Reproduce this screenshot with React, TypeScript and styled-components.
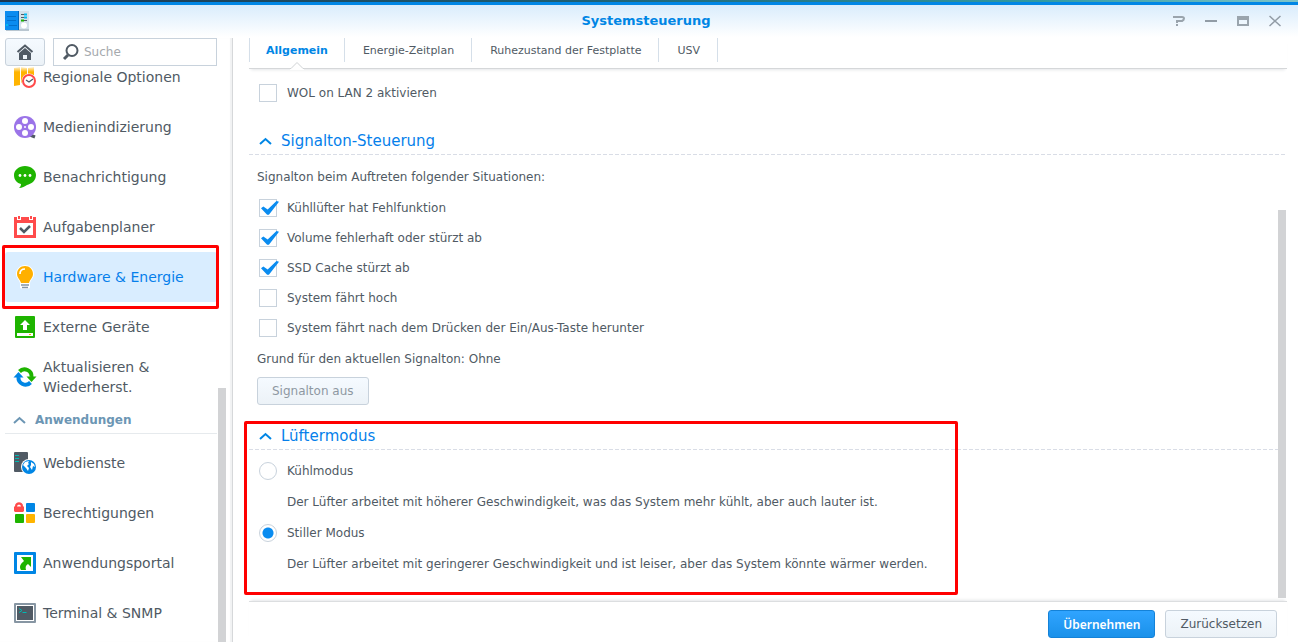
import React, { useState } from 'react';
import styled, { createGlobalStyle, css } from 'styled-components';

const color = {
  blue: '#0086e5',
  link: '#057feb',
  text: '#505a64',
  line: '#c8d2dc',
  red: '#ff0000',
  thumb: '#d2d3d5',
};

const GlobalStyle = createGlobalStyle`
  *, *::before, *::after { box-sizing: border-box; }
  html, body, #root { height: 100%; margin: 0; }
  body, button, input { font-family: Verdana, 'DejaVu Sans', sans-serif; color: ${color.text}; }
  body { background: #fff; overflow: hidden; }
`;

const Desktop = styled.div`
  display: flex;
  flex-direction: column;
  height: 100vh;
  padding-top: 2px;
  background: linear-gradient(90deg, #1c3550, #1d5f74 45%, #2f9aa3 80%, #7cc4cb);
`;

const Window = styled.div`
  display: flex;
  flex: 1;
  flex-direction: column;
  min-height: 0;
  border-top: 3px solid ${color.blue};
  background: linear-gradient(#d9ecfc, #fff 32px);
`;

const TitleBar = styled.header`
  display: grid;
  grid-template-columns: 1fr auto 1fr;
  align-items: center;
  height: 33px;
  padding: 0 11px 1px 5px;
`;

const Title = styled.h1`
  margin: 0;
  font-size: 13px;
  line-height: 20px;
  font-weight: bold;
  color: ${color.blue};
`;

const Controls = styled.div`
  display: flex;
  justify-content: flex-end;
  gap: 8px;
`;

const ControlButton = styled.button`
  display: grid;
  place-items: center;
  width: 24px;
  height: 24px;
  padding: 0;
  border: 0;
  background: none;
`;

const Body = styled.div`
  display: flex;
  flex: 1;
  min-height: 0;
`;

const Sidebar = styled.aside`
  display: flex;
  flex-direction: column;
  flex: none;
  width: 233px;
  border-right: 1px solid #d6d8da;
  box-shadow: inset -2px 0 1px #f1f2f3;
`;

const Tools = styled.div`
  display: flex;
  gap: 8px;
  padding: 0 15px 0 5px;
`;

const buttonFace = css`
  border: 1px solid ${color.line};
  border-radius: 3px;
  background: linear-gradient(#f5faff, #ecf2f7);
`;

const HomeButton = styled.button`
  ${buttonFace}
  display: grid;
  flex: none;
  place-items: center;
  width: 40px;
  height: 28px;
  padding: 0;
`;

const SearchBox = styled.label`
  display: flex;
  align-items: center;
  flex: 1;
  gap: 4px;
  height: 28px;
  min-width: 0;
  padding-left: 8px;
  border: 1px solid ${color.line};
  background: #fff;
`;

const SearchInput = styled.input`
  flex: 1;
  min-width: 0;
  padding: 0;
  border: 0;
  outline: 0;
  background: none;
  font-size: 12px;
  &::placeholder { color: #a5a9ad; opacity: 1; }
`;

const NavViewport = styled.nav`
  position: relative;
  flex: 1;
  min-height: 0;
  padding: 0 15px 0 5px;
  overflow: hidden;
  &::before {
    content: '';
    position: absolute;
    z-index: 1;
    inset: 0 15px auto 5px;
    height: 6px;
    background: linear-gradient(#fff, #fff0);
  }
`;

const NavScroll = styled.div`
  margin-top: -14px;
`;

const NavItem = styled.a<{ $active?: boolean }>`
  display: flex;
  position: relative;
  align-items: center;
  gap: 6px;
  height: 50px;
  padding-left: 8px;
  border-radius: 3px;
  background: ${(p) => (p.$active ? '#d9edff' : 'transparent')};
  color: ${(p) => (p.$active ? color.link : color.text)};
  font-size: 14px;
  line-height: 20px;
  text-decoration: none;
`;

const NavLabel = styled.span`
  flex: 1;
`;

const NavIcon = styled.svg`
  flex: none;
  width: 24px;
  height: 24px;
`;

const Marker = styled.span<{ $wide?: boolean }>`
  position: absolute;
  inset: ${(p) => (p.$wide ? '-5px auto -15px -5px' : '-7px -2px -7px -3px')};
  width: ${(p) => (p.$wide ? '714px' : 'auto')};
  border: 3px solid ${color.red};
  border-radius: 2px;
  pointer-events: none;
`;

const NavHeading = styled.button`
  display: flex;
  align-items: center;
  gap: 9px;
  width: 100%;
  height: 32px;
  margin-bottom: 4px;
  padding: 4px 0 0 8px;
  border: 0;
  border-bottom: 1px solid #e6eaed;
  background: none;
  color: #6c96b4;
  font-size: 12px;
  font-weight: bold;
`;

const Thumb = styled.span<{ $main?: boolean }>`
  position: absolute;
  top: ${(p) => (p.$main ? '141px' : '322px')};
  right: ${(p) => (p.$main ? '12px' : '6px')};
  bottom: ${(p) => (p.$main ? '3px' : '0')};
  width: 8px;
  background: ${color.thumb};
`;

const Main = styled.main`
  display: flex;
  flex: 1;
  flex-direction: column;
  min-width: 0;
`;

const Tabs = styled.div`
  display: flex;
  height: 31px;
  margin: 0 11px 0 16px;
  border-bottom: 1px solid #d5d7d9;
  box-shadow: 0 3px 3px -2px #e4e6e8;
`;

const Tab = styled.button<{ $active: boolean }>`
  position: relative;
  height: 24px;
  padding: 0 17px 0 18px;
  border: 0;
  border-right: 1px solid #d5dfe9;
  background: none;
  color: ${(p) => (p.$active ? color.blue : color.text)};
  font-size: 11px;
  font-weight: ${(p) => (p.$active ? 'bold' : 'normal')};
  white-space: nowrap;
  &:first-child { padding: 0 16px; border-left: 1px solid #d5dfe9; }
`;

const Notch = styled.svg`
  position: absolute;
  top: 24px;
  left: 50%;
  width: 14px;
  height: 8px;
  margin-left: -7px;
`;

const Content = styled.div`
  position: relative;
  flex: 1;
  min-height: 0;
  padding: 9px 11px 0 16px;
  overflow: hidden;
`;

const Section = styled.section`
  position: relative;
  margin-bottom: 21px;
  &:first-of-type { margin-bottom: 23px; }
  &:last-of-type { margin-bottom: 0; }
`;

const SectionHeading = styled.h2`
  height: 24px;
  margin: 0 0 6px;
  background: repeating-linear-gradient(90deg, #d9dde6 0 4px, transparent 4px 6px) bottom / 100% 1px no-repeat;
  font-weight: normal;
`;

const SectionToggle = styled.button`
  display: flex;
  align-items: center;
  gap: 9px;
  height: 20px;
  padding: 0 0 0 10px;
  border: 0;
  background: none;
  color: ${color.link};
  font-size: 15px;
  line-height: 20px;
`;

const Choice = styled.label`
  display: flex;
  align-items: center;
  gap: 10px;
  height: 30px;
  padding-left: 10px;
  font-size: 12px;
`;

const Paragraph = styled.p<{ $indent?: boolean }>`
  margin: 0;
  padding-left: ${(p) => (p.$indent ? '38px' : '8px')};
  font-size: 12px;
  line-height: 32px;
`;

const Check = styled.input`
  position: relative;
  flex: none;
  appearance: none;
  width: 18px;
  height: 18px;
  margin: 0;
  border: 1px solid ${color.line};
  background: #fff;
  &:checked::after {
    content: '';
    position: absolute;
    top: 1px;
    left: 1px;
    width: 18px;
    height: 14px;
    background: #0a8cf0;
    clip-path: polygon(0 52%, 13% 40%, 37% 60%, 86% 0, 100% 5%, 44% 98%, 34% 98%);
  }
`;

const Radio = styled.input`
  flex: none;
  appearance: none;
  width: 18px;
  height: 18px;
  margin: 0;
  border: 1px solid ${color.line};
  border-radius: 50%;
  background: #fff;
  &:checked { background: radial-gradient(circle, #0a8cf0 5px, #fff 6px); }
`;

const Button = styled.button<{ $primary?: boolean }>`
  ${buttonFace}
  height: 28px;
  padding: 0 14px;
  font-size: 12px;
  &:disabled { color: #8e98a2; }
  ${(p) =>
    p.$primary &&
    css`
      border-color: #1482d8;
      background: linear-gradient(#30a4ff, #1a91ea);
      color: #fff;
      font-family: 'Noto Sans', sans-serif;
      font-weight: 600;
    `}
`;

const ButtonRow = styled.div`
  padding: 2px 0 0 8px;
`;

const Footer = styled.footer`
  display: flex;
  justify-content: flex-end;
  gap: 10px;
  height: 41px;
  margin: 0 11px 0 16px;
  padding: 8px 10px 0 0;
  border-top: 1px solid #dcdee0;
  box-shadow: 0 -3px 3px -2px #e4e6e8;
`;

const Chevron = ({ stroke }: { stroke: string }) => (
  <svg width="13" height="8" viewBox="0 0 13 8" fill="none" stroke={stroke} strokeWidth="2" aria-hidden="true">
    <path d="M1 7l5.500-5L12 7" />
  </svg>
);

const icons: Record<string, React.ReactNode> = {
  region: (
    <>
      <path fill="#ffb400" d="M1 3l6-1v18l-6 1zM8 2l6 1v9l-6 6zM15 3l6-1v8h-6z" />
      <circle cx="16" cy="16" r="7.500" fill="#fff" />
      <circle cx="16" cy="16" r="6" fill="#fff" stroke="#ff4b4b" strokeWidth="2" />
      <path d="M13 15l3 2 4-3" fill="none" stroke="#505a64" strokeWidth="1.300" />
    </>
  ),
  media: (
    <>
      <path d="M17 20l5 2" stroke="#505a64" strokeWidth="3" />
      <circle cx="12" cy="12" r="11" fill="#9b74e8" />
      <g fill="#fff">
        <circle cx="12" cy="6" r="3" />
        <circle cx="12" cy="18" r="3" />
        <circle cx="6" cy="12" r="3" />
        <circle cx="18" cy="12" r="3" />
        <circle cx="12" cy="12" r="1" />
      </g>
    </>
  ),
  bell: (
    <>
      <path fill="#1eb400" d="M12 1c6 0 11 4 11 9 0 6-5 9-9 10-2 1-5 3-8 3 1-1 2-2 2-4-4-1-7-4-7-9 0-5 5-9 11-9z" />
      <g fill="#fff">
        <circle cx="7" cy="10.500" r="1.400" />
        <circle cx="12" cy="10.500" r="1.400" />
        <circle cx="17" cy="10.500" r="1.400" />
      </g>
    </>
  ),
  tasks: (
    <>
      <path fill="#ff4b4b" d="M1 2h22v21H1z" />
      <path fill="#fff" d="M4 8h16v12H4zM4 1h4v4H4zM16 1h4v4h-4z" />
      <path fill="#ff4b4b" d="M5 1h2v3H5zM17 1h2v3h-2z" />
      <path d="M7 13l4 4 6-6" fill="none" stroke="#505a64" strokeWidth="2.500" />
    </>
  ),
  bulb: (
    <>
      <path fill="#fff" d="M12 0c5 0 9 4 9 9 0 4-3 5-4 9v5l-3 1h-4l-3-1v-5C6 14 3 13 3 9c0-5 4-9 9-9z" />
      <path fill="#ffb000" d="M12 1c4.500 0 8 3.500 8 8 0 4-3 5-4 9H8C7 14 4 13 4 9c0-4.500 3.500-8 8-8z" />
      <path d="M7 9c0-3 2-5 5-5" fill="none" stroke="#fff" strokeWidth="1.700" />
      <path d="M8 20h8M9 22.500h6" stroke="#8796a3" strokeWidth="1.300" />
    </>
  ),
  drive: (
    <>
      <rect x="2" y="1" width="20" height="22" rx="1" fill="#1eb400" />
      <path fill="#fff" d="M12 5l5 5h-3v5h-4v-5H7zM4 18h16v3H4z" />
      <path fill="#ffb000" d="M16 19h2v1h-2z" />
    </>
  ),
  update: (
    <>
      <path d="M6.500 6.500A7 7 0 0 1 18.500 12" fill="none" stroke="#1eb400" strokeWidth="4" />
      <path fill="#1eb400" d="M13.500 11.500H23.500L18.500 17z" />
      <path d="M17.500 17.500A7 7 0 0 1 5.500 12" fill="none" stroke="#0086e5" strokeWidth="4" />
      <path fill="#0086e5" d="M.5 12.500H10.500L5.500 7z" />
    </>
  ),
  web: (
    <>
      <rect x="1" y="1" width="14" height="20" rx="1" fill="#505a64" />
      <path d="M2 4.500h4M2 7.500h4M2 10.500h4" stroke="#00b9b4" />
      <circle cx="16" cy="16" r="8" fill="#fff" />
      <circle cx="16" cy="16" r="7" fill="#0086e5" />
      <path fill="#fff" d="M10 14l2-3 4-1-1 2 1 1-2 2 2 2-1 3-2-3zM18 11l3 2 1 3-2-1-1 4-2-3 1-2z" />
    </>
  ),
  rights: (
    <>
      <path fill="#ff4b4b" d="M2 5c0-5 8-5 8 0l1 1v4l-1 1H2l-1-1V6z" />
      <path d="M4 5.500c0-2.500 4-2.500 4 0z" fill="#fff" />
      <rect x="13" y="2" width="9" height="9" rx="1" fill="#0086e5" />
      <rect x="2" y="13" width="9" height="9" rx="1" fill="#1eb400" />
      <rect x="13" y="13" width="9" height="9" rx="1" fill="#ffb400" />
    </>
  ),
  portal: (
    <>
      <rect x="1" y="1" width="22" height="22" rx="1" fill="#0086e5" />
      <path fill="#fff" d="M4 4h16v16H4z" />
      <path fill="#1eb400" d="M8 6h10v10l-3-3c-2 1-3 3-2 6H8c-2-3-1-6 3-9z" />
    </>
  ),
  terminal: (
    <>
      <rect x="1" y="2" width="22" height="20" rx="1" fill="#8796a3" />
      <path fill="#fff" d="M3 4h18v16H3z" />
      <path fill="#505a64" d="M4 5h16v14H4z" />
      <path d="M6 7.500l3 2-3 2M9.500 11.500h4" fill="none" stroke="#00b9b4" />
    </>
  ),
};

const systemItems = [
  ['region', 'Regionale Optionen'],
  ['media', 'Medienindizierung'],
  ['bell', 'Benachrichtigung'],
  ['tasks', 'Aufgabenplaner'],
  ['bulb', 'Hardware & Energie'],
  ['drive', 'Externe Geräte'],
  ['update', 'Aktualisieren & Wiederherst.'],
];

const appItems = [
  ['web', 'Webdienste'],
  ['rights', 'Berechtigungen'],
  ['portal', 'Anwendungsportal'],
  ['terminal', 'Terminal & SNMP'],
];

const NavList = ({ items }: { items: string[][] }) => (
  <>
    {items.map(([icon, label]) => (
      <NavItem key={icon} href={`#${icon}`} $active={icon === 'bulb'}>
        <NavIcon viewBox="0 0 24 24" aria-hidden="true">{icons[icon]}</NavIcon>
        <NavLabel>{label}</NavLabel>
        {icon === 'bulb' && <Marker />}
      </NavItem>
    ))}
  </>
);

const tabNames = ['Allgemein', 'Energie-Zeitplan', 'Ruhezustand der Festplatte', 'USV'];

const beepOptions: [string, boolean][] = [
  ['Kühllüfter hat Fehlfunktion', true],
  ['Volume fehlerhaft oder stürzt ab', true],
  ['SSD Cache stürzt ab', true],
  ['System fährt hoch', false],
  ['System fährt nach dem Drücken der Ein/Aus-Taste herunter', false],
];

const fanModes = [
  ['Kühlmodus', 'Der Lüfter arbeitet mit höherer Geschwindigkeit, was das System mehr kühlt, aber auch lauter ist.'],
  ['Stiller Modus', 'Der Lüfter arbeitet mit geringerer Geschwindigkeit und ist leiser, aber das System könnte wärmer werden.'],
];

export default function App() {
  const [tab, setTab] = useState(0);
  const [fan, setFan] = useState(1);

  return (
    <>
      <GlobalStyle />
      <Desktop>
        <Window>
          <TitleBar>
            <svg width="24" height="22" viewBox="0 0 24 22" aria-hidden="true">
              <path fill="#b9c6d0" d="M1 19h23v2H1z" />
              <path fill="#d3e0ea" d="M14 1h10v18H14z" />
              <path fill="#0a8cf0" d="M0 1h14v19H0z" />
              <path d="M13.500 1v19" stroke="#0067bd" />
              <path d="M2 6.500h9M2 10.500h9M4 15.500h8" stroke="#0070cc" />
              <path fill="#00b9f0" d="M1 14h2v2H1z" />
              <path d="M16 4.500h6M16 7.500h6M16 10.500h6" stroke="#505a64" />
              <path d="M19 4.500h3M19 7.500h3" stroke="#00b9f0" strokeWidth="2" />
              <path d="M16 10.500h3" stroke="#1eb400" strokeWidth="2" />
              <circle cx="19" cy="15.500" r="3" fill="#fff" />
            </svg>
            <Title>Systemsteuerung</Title>
            <Controls>
              <ControlButton aria-label="Hilfe">
                <svg width="12" height="12" viewBox="0 0 12 12" fill="none" stroke="#9aa4ad" strokeWidth="2">
                  <path d="M0 2h9q2 0 2 1.500T9 6H4v2M4 9v2" />
                </svg>
              </ControlButton>
              <ControlButton aria-label="Minimieren">
                <svg width="12" height="12" viewBox="0 0 12 12"><path fill="#929ca6" d="M0 5h12v2H0z" /></svg>
              </ControlButton>
              <ControlButton aria-label="Maximieren">
                <svg width="12" height="12" viewBox="0 0 12 12">
                  <path fill="#9aa4ad" fillRule="evenodd" d="M0 1h12v10H0zM2 5h8v4H2z" />
                </svg>
              </ControlButton>
              <ControlButton aria-label="Schließen">
                <svg width="12" height="12" viewBox="0 0 12 12" stroke="#929ca6" strokeWidth="1.500">
                  <path d="M0.500 1l11 10M11.500 1L0.500 11" />
                </svg>
              </ControlButton>
            </Controls>
          </TitleBar>
          <Body>
            <Sidebar>
              <Tools>
                <HomeButton aria-label="Startseite">
                  <svg width="18" height="18" viewBox="0 0 18 18">
                    <path d="M1.500 9L9 2.500 16.500 9" fill="none" stroke="#505a64" strokeWidth="2" />
                    <path fill="#505a64" fillRule="evenodd" d="M9 5l6 5v7H3v-7zM7 12v4h4v-4z" />
                  </svg>
                </HomeButton>
                <SearchBox>
                  <svg width="18" height="18" viewBox="0 0 18 18" fill="none" stroke="#505a64" aria-hidden="true">
                    <circle cx="10" cy="7.500" r="5.500" strokeWidth="2" />
                    <path d="M6 12l-4 4" strokeWidth="3" />
                  </svg>
                  <SearchInput type="text" placeholder="Suche" aria-label="Suche" />
                </SearchBox>
              </Tools>
              <NavViewport>
                <NavScroll>
                  <NavList items={systemItems} />
                  <NavHeading>
                    <Chevron stroke="#6c96b4" />
                    Anwendungen
                  </NavHeading>
                  <NavList items={appItems} />
                </NavScroll>
                <Thumb />
              </NavViewport>
            </Sidebar>
            <Main>
              <Tabs role="tablist">
                {tabNames.map((name, i) => (
                  <Tab key={name} role="tab" aria-selected={tab === i} $active={tab === i} onClick={() => setTab(i)}>
                    {name}
                    {tab === i && (
                      <Notch viewBox="0 0 14 8" aria-hidden="true">
                        <path d="M0 6.500h1l6-6 6 6h1V8H0z" fill="#fff" />
                        <path d="M0 6.500h1l6-6 6 6h1" fill="none" stroke="#cfd2d4" />
                      </Notch>
                    )}
                  </Tab>
                ))}
              </Tabs>
              <Content>
                <Section>
                  <Choice>
                    <Check type="checkbox" />
                    WOL on LAN 2 aktivieren
                  </Choice>
                </Section>
                <Section>
                  <SectionHeading>
                    <SectionToggle>
                      <Chevron stroke={color.blue} />
                      Signalton-Steuerung
                    </SectionToggle>
                  </SectionHeading>
                  <Paragraph>Signalton beim Auftreten folgender Situationen:</Paragraph>
                  {beepOptions.map(([label, on]) => (
                    <Choice key={label}>
                      <Check type="checkbox" defaultChecked={on} />
                      {label}
                    </Choice>
                  ))}
                  <Paragraph>Grund für den aktuellen Signalton: Ohne</Paragraph>
                  <ButtonRow>
                    <Button disabled>Signalton aus</Button>
                  </ButtonRow>
                </Section>
                <Section>
                  <SectionHeading>
                    <SectionToggle>
                      <Chevron stroke={color.blue} />
                      Lüftermodus
                    </SectionToggle>
                  </SectionHeading>
                  {fanModes.map(([label, text], i) => (
                    <React.Fragment key={label}>
                      <Choice>
                        <Radio type="radio" name="fan" checked={fan === i} onChange={() => setFan(i)} />
                        {label}
                      </Choice>
                      <Paragraph $indent>{text}</Paragraph>
                    </React.Fragment>
                  ))}
                  <Marker $wide />
                </Section>
                <Thumb $main />
              </Content>
              <Footer>
                <Button $primary>Übernehmen</Button>
                <Button>Zurücksetzen</Button>
              </Footer>
            </Main>
          </Body>
        </Window>
      </Desktop>
    </>
  );
}
